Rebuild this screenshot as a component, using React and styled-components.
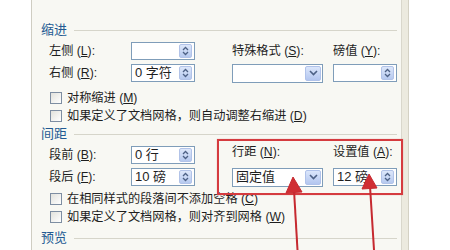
import styled, { createGlobalStyle } from 'styled-components';

const Global = createGlobalStyle`
    html, body {
        margin: 0;
        background: #ffffff;
    }
    body {
        font-family: "Liberation Sans", "Noto Sans CJK SC", sans-serif;
        font-size: 12.2px;
        color: #1e1e1e;
    }
`;

const Page = styled.div`
    position: relative;
    width: 450px;
    height: 250px;
    overflow: hidden;
    display: flex;
`;

const Dialog = styled.div`
    margin-left: 31px;
    width: 371px;
    height: 250px;
    box-sizing: border-box;
    background: #f8f8f3;
    border-left: 1px solid #cfcdc2;
    border-right: 1px solid #d9d7cc;
    padding: 22px 4px 0 9px;
`;

const Frame = styled.div`
    width: 6px;
    height: 250px;
    background: #eceadf;
    border-right: 1px solid #d4d1c4;
`;

const SectionHeader = styled.div`
    display: flex;
    align-items: center;
    gap: 7px;
    height: 16px;
    margin-top: ${p => p.$top || 0}px;
    color: #235a92;
    font-size: 13px;
    line-height: 16px;

    &::after {
        content: '';
        flex: 1;
        height: 1px;
        background: #d6d5ca;
    }
`;

const FieldGrid = styled.div`
    display: grid;
    grid-template-columns: 82px 64px 37px 91px 10px 64px;
    grid-auto-rows: 22px;
    margin-top: 2px;
    padding-left: 8px;
    align-items: center;
`;

const Label = styled.span`
    grid-column: ${p => p.$col};
    white-space: nowrap;
    line-height: 16px;
    transform: translateY(${p => p.$shift || 0}px);
`;

const Box = styled.div`
    grid-column: ${p => p.$col};
    position: relative;
    height: ${p => p.$h || 18}px;
    box-sizing: border-box;
    border: 1px solid #7f9db9;
    background: #ffffff;
    display: flex;
    align-items: center;
    padding-left: 3px;
    white-space: pre;
    line-height: 16px;
    font-size: 13px;
`;

const Spin = styled.div`
    position: absolute;
    right: 2px;
    top: 1px;
    bottom: 1px;
    width: 13px;
    border-radius: 2px;
    background: linear-gradient(#dde7fa, #b6c9ef);
    border: 1px solid #b2c3e8;
    box-sizing: border-box;
    display: flex;
    align-items: center;
    justify-content: center;
`;

const Drop = styled.div`
    position: absolute;
    right: 1px;
    top: 1px;
    bottom: 1px;
    width: 16px;
    border-radius: 2px;
    background: linear-gradient(#dbe6fb, #b3c6ef);
    border: 1px solid #b0c2ea;
    box-sizing: border-box;
    display: flex;
    align-items: center;
    justify-content: center;
`;

const CheckRow = styled.label`
    display: flex;
    align-items: center;
    gap: 5px;
    height: 18px;
    margin-top: ${p => p.$top || 0}px;
    padding-left: 9px;
    white-space: pre;
    line-height: 16px;
`;

const CheckBox = styled.span`
    width: 12px;
    height: 12px;
    box-sizing: border-box;
    border: 1px solid #7e8ea2;
    background: linear-gradient(135deg, #e2e2dc, #ffffff);
`;

const Highlight = styled.div`
    position: absolute;
    left: 217px;
    top: 139px;
    width: 186px;
    height: 56px;
    box-sizing: border-box;
    border: 2px solid #d53b3f;
    box-shadow: 0 0 1px rgba(200, 40, 40, 0.4);
`;

const Arrows = styled.svg`
    position: absolute;
    left: 0;
    top: 0;
`;

function Acc({ k }) {
    return <> (<u>{k}</u>)</>;
}

function Check({ top, children }) {
    return (
        <CheckRow $top={top}>
            <CheckBox />
            <span>{children}</span>
        </CheckRow>
    );
}

function SpinBox({ col, value }) {
    return (
        <Box $col={col}>
            {value}
            <Spin>
                <svg width="7" height="10" viewBox="0 0 7 10">
                    <path d="M1 4 L3.5 1.5 L6 4 M1 6 L3.5 8.5 L6 6" fill="none" stroke="#4d6185" strokeWidth="1.3" />
                </svg>
            </Spin>
        </Box>
    );
}

function DropBox({ col, value }) {
    return (
        <Box $col={col} $h={19}>
            {value}
            <Drop>
                <svg width="9" height="6" viewBox="0 0 9 6">
                    <path d="M1 1 L4.5 4.5 L8 1" fill="none" stroke="#4d6185" strokeWidth="1.6" />
                </svg>
            </Drop>
        </Box>
    );
}

export default function App() {
    return (
        <Page>
            <Global />
            <Dialog>
                <SectionHeader>缩进</SectionHeader>
                <FieldGrid>
                    <Label $col={1}>左侧<Acc k="L" />:</Label>
                    <SpinBox col={2} value="" />
                    <Label $col={4}>特殊格式<Acc k="S" />:</Label>
                    <Label $col={6}>磅值<Acc k="Y" />:</Label>

                    <Label $col={1}>右侧<Acc k="R" />:</Label>
                    <SpinBox col={2} value="0 字符" />
                    <DropBox col={4} value="" />
                    <SpinBox col={6} value="" />
                </FieldGrid>
                <Check top={5}>对称缩进<Acc k="M" /></Check>
                <Check>如果定义了文档网格，则自动调整右缩进<Acc k="D" /></Check>

                <SectionHeader $top={1}>间距</SectionHeader>
                <FieldGrid>
                    <Label $col={1}>段前<Acc k="B" />:</Label>
                    <SpinBox col={2} value="0 行" />
                    <Label $col={4} $shift={-3}>行距<Acc k="N" />:</Label>
                    <Label $col={6} $shift={-3}>设置值<Acc k="A" />:</Label>

                    <Label $col={1}>段后<Acc k="F" />:</Label>
                    <SpinBox col={2} value="10 磅" />
                    <DropBox col={4} value="固定值" />
                    <SpinBox col={6} value="12 磅" />
                </FieldGrid>
                <Check top={2}>在相同样式的段落间不添加空格<Acc k="C" /></Check>
                <Check>如果定义了文档网格，则对齐到网格<Acc k="W" /></Check>

                <SectionHeader $top={4}>预览</SectionHeader>
            </Dialog>
            <Frame />

            <Highlight />
            <Arrows width="450" height="250" viewBox="0 0 450 250">
                <g stroke="#c62a30" strokeWidth="2" fill="#d02e34">
                    <line x1="297.5" y1="250" x2="294" y2="190" />
                    <polygon points="293,177 286,193 302,192" strokeWidth="1" />
                    <line x1="374" y1="250" x2="370" y2="186" />
                    <polygon points="369,174 362,189 377,188" strokeWidth="1" />
                </g>
            </Arrows>
        </Page>
    );
}
